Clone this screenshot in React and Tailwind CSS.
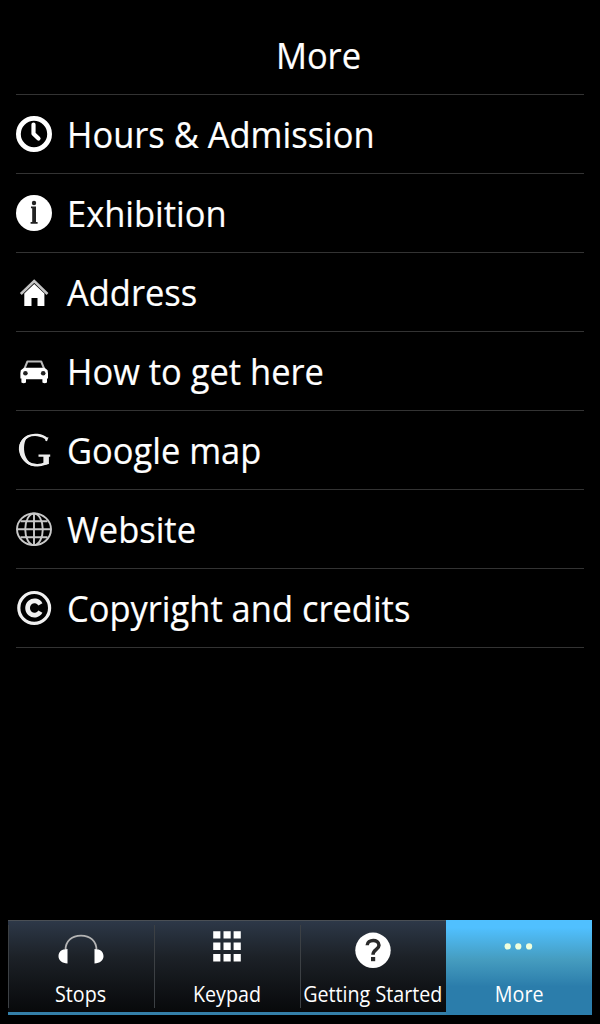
import React from "react";

const ClockIcon = () => (
  <svg width="36" height="36" viewBox="0 0 36 36" fill="none" stroke="#fff">
    <circle cx="18" cy="18" r="15.6" strokeWidth="4.8" />
    <path d="M17.5 8.5v9.3l5 4.8" strokeWidth="4.2" strokeLinecap="round" strokeLinejoin="round" />
  </svg>
);

const InfoIcon = () => (
  <svg width="36" height="36" viewBox="0 0 36 36">
    <circle cx="18" cy="18" r="18" fill="#fff" />
    <circle cx="18" cy="8" r="2.2" fill="#222" />
    <path d="M15 11.5h5v15.600h1.600v1.700h-7v-1.700h1.600V13.200H15z" fill="#222" />
  </svg>
);

const HomeIcon = () => (
  <svg width="36" height="36" viewBox="0 0 36 36">
    <path d="M4.8 20L18.200 7l13.300 13" fill="none" stroke="#c4c4c4" strokeWidth="2.600" />
    <path d="M18.200 10l10.200 9.500v12.500h-6.900v-8h-6v8H8.300V19.500z" fill="#fff" />
  </svg>
);

const CarIcon = () => (
  <svg width="36" height="36" viewBox="0 0 36 36">
    <path d="M8.500 15.600l2.900-7.100h13.800l2.900 7.100" fill="none" stroke="#bbb" strokeWidth="2" strokeLinejoin="round" />
    <path d="M8 14.800h20.600l3 2.400.4 3v5.400h-1v3.800q-2.300 1.600-4.600 0v-3.200H10v3.200q-2.300 1.600-4.600 0v-3.800h-1v-5.400l.4-3z" fill="#fff" />
    <circle cx="9.400" cy="20.200" r="2.300" fill="#222" />
    <circle cx="27.200" cy="20.200" r="2.300" fill="#222" />
  </svg>
);

const GoogleIcon = () => (
  <svg width="36" height="36" viewBox="0 0 36 36" fill="none" stroke="#eee">
    <path d="M31 7C26 2.300 17 2 12 4.400C5.500 7.600 3.200 14 5.200 21C7.500 29 14 33.400 21.500 33.200C25 33.100 28 32 31 31" strokeWidth="2.400" />
    <path d="M14 3C5 5.600 1.500 13 3.400 20.500C5.400 28.500 12 34.200 20 34.300C12 31 8.600 25 8.100 18C7.700 10.500 10 5.300 14 3z" fill="#eee" stroke="none" />
    <path d="M29 6l3.500-.8-1.500 4-1.600-.4zM22.500 22.500h11.700v2.200h-1.300v7.300l-5.500 1v-8.300h-4.900z" fill="#eee" stroke="none" />
  </svg>
);

const GlobeIcon = () => (
  <svg width="36" height="36" viewBox="0 0 36 36" fill="none" stroke="#c8c8c8" strokeWidth="1.900">
    <ellipse cx="18" cy="18.300" rx="17" ry="15.800" />
    <ellipse cx="18" cy="18.300" rx="8.800" ry="15.800" />
    <path d="M18 2.500v31.600M.8 18.300h34.400M4.500 10.300h27M4.500 26.300h27" />
  </svg>
);

const CopyrightIcon = () => (
  <svg width="36" height="36" viewBox="0 0 36 36" fill="none" stroke="#f0f0f0">
    <circle cx="18.200" cy="17.900" r="15.400" strokeWidth="3.200" />
    <path d="M24.400 14.300a6.900 7.200 0 1 0 0 7.400" strokeWidth="4.700" />
  </svg>
);

const HeadphonesIcon = () => (
  <svg width="46" height="36" viewBox="0 0 46 36">
    <path d="M7.500 20C7.500 11 14 5.600 23 5.600S38.500 11 38.500 20" fill="none" stroke="#b4b4b4" strokeWidth="1.800" />
    <path d="M9.500 19v14.400C4 33.400.5 30.300.5 26.300s3-6.700 6-6.700zM36.500 19v14.400c5.500 0 9-3.100 9-7.100s-3-6.700-6-6.700z" fill="#fff" />
  </svg>
);

const KeypadIcon = () => (
  <svg width="36" height="36" viewBox="0 0 36 36" fill="#fff">
    <path d="M4.200 1.200h7.200v7.300H4.200zM14.500 1.200h7.200v7.300h-7.200zM24.600 1.200h7.200v7.300h-7.200zM4.200 12.600h7.200v7.300H4.200zM14.500 12.600h7.200v7.300h-7.200zM24.600 12.600h7.200v7.300h-7.200zM4.200 24.100h7.200v7.300H4.200zM14.500 24.100h7.200v7.300h-7.200zM24.600 24.100h7.200v7.300h-7.200z" />
  </svg>
);

const HelpIcon = () => (
  <svg width="36" height="36" viewBox="0 0 36 36">
    <circle cx="18" cy="18.300" r="17.700" fill="#fff" />
    <path d="M12.200 13.300C12.300 7 24 6.800 24 13.200C24 17.500 18 17.300 18 22.800" fill="none" stroke="#2a2a2a" strokeWidth="3.500" />
    <path d="M16 25h4.200v4.200H16z" fill="#2a2a2a" />
  </svg>
);

const DotsIcon = () => (
  <svg width="36" height="36" viewBox="0 0 36 36" fill="#efffdc">
    <circle cx="6.700" cy="16.400" r="3.100" />
    <circle cx="17.300" cy="16.400" r="3.100" />
    <circle cx="28.100" cy="16.400" r="3.100" />
  </svg>
);

const menuItems = [
  { label: "Hours & Admission", icon: ClockIcon },
  { label: "Exhibition", icon: InfoIcon },
  { label: "Address", icon: HomeIcon },
  { label: "How to get here", icon: CarIcon },
  { label: "Google map", icon: GoogleIcon },
  { label: "Website", icon: GlobeIcon },
  { label: "Copyright and credits", icon: CopyrightIcon },
];

const tabs = [
  { label: "Stops", icon: HeadphonesIcon },
  { label: "Keypad", icon: KeypadIcon },
  { label: "Getting Started", icon: HelpIcon, iconClass: "translate-y-[2px]" },
  { label: "More", icon: DotsIcon, active: true },
];

const App = () => {
  return (
    <div className="flex h-screen flex-col overflow-hidden bg-black px-2 pb-[9px] font-['Open_Sans','Noto_Sans',sans-serif] text-white">
      {/* Title */}
      <h1 className="mx-2 flex h-[95px] items-center justify-center border-b border-[#333] pt-[18px] pl-[37px] text-[36px] leading-none [-webkit-text-stroke:0.2px_white]">
        <span className="scale-x-[0.957]">More</span>
      </h1>

      {/* Menu */}
      <ul className="mx-2 [-webkit-text-stroke:0.2px_white]">
        {menuItems.map(({ label, icon: Icon }) => (
          <li key={label} className="flex h-[79px] items-center gap-[15px] border-b border-[#333]">
            <Icon />
            <span className="origin-left scale-x-[0.957] pt-[2px] text-[36px] leading-none whitespace-nowrap">
              {label}
            </span>
          </li>
        ))}
      </ul>

      {/* Tab bar */}
      <nav className="mt-auto grid h-[95px] grid-cols-4">
        {tabs.map(({ label, icon: Icon, iconClass, active }) => (
          <div
            key={label}
            className={
              active
                ? "flex flex-col items-center bg-linear-to-b from-[#50c0ff] from-8% via-[#459cbf] via-42% to-[#2b7dab] to-70% pt-[10px]"
                : "flex border-t border-b-3 border-t-[#4a4f55] border-b-[#347fa8] bg-linear-to-b from-[#2d3848] via-[#1c2127] via-40% to-[#08090b]"
            }
          >
            {!active && <span className="mt-1 mb-1 w-px shrink-0 bg-[#3c4044]" />}
            <div
              className={
                active ? "flex flex-col items-center" : "-ml-px flex min-w-0 flex-1 flex-col items-center pt-[9px]"
              }
            >
              <div className={iconClass}>
                <Icon />
              </div>
              <span className="mt-4 scale-x-[0.895] text-[22px] leading-[22px] whitespace-nowrap">{label}</span>
            </div>
          </div>
        ))}
      </nav>
    </div>
  );
};

export default App;
